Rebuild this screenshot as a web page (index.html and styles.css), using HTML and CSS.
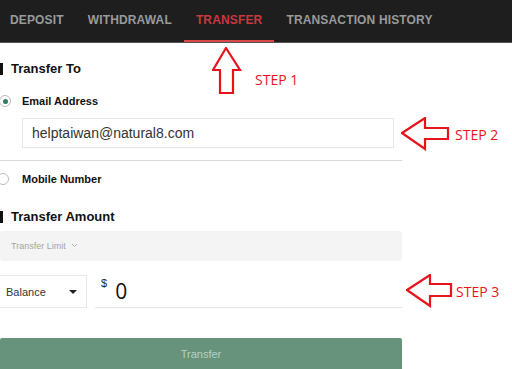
FILE: index.html
```html
<!DOCTYPE html>
<html lang="en">
<head>
  <meta charset="UTF-8" />
  <meta name="viewport" content="width=device-width, initial-scale=1" />
  <title>Transfer</title>
  <link rel="stylesheet" href="styles.css">
</head>
<body>
  <nav class="tabs">
    <a class="tab">DEPOSIT</a>
    <a class="tab">WITHDRAWAL</a>
    <a class="tab active">TRANSFER</a>
    <a class="tab">TRANSACTION HISTORY</a>
  </nav>

  <div class="page">
    <div class="form">
      <h3 class="title">Transfer To</h3>

      <label class="radio-row">
        <span class="radio checked"></span>
        <span>Email Address</span>
      </label>
      <div class="email-input">helptaiwan@natural8.com</div>

      <div class="divider"></div>

      <label class="radio-row second">
        <span class="radio"></span>
        <span>Mobile Number</span>
      </label>

      <h3 class="title amount-title">Transfer Amount</h3>

      <div class="limit">
        Transfer Limit
        <svg class="chev" width="7" height="5" viewBox="0 0 7 5"><path d="M1 1 L3.5 3.5 L6 1" fill="none" stroke="#b0b0b0" stroke-width="1"/></svg>
      </div>

      <div class="amount-row">
        <div class="select">
          <span>Balance</span>
          <span class="caret"></span>
        </div>
        <div class="amount">
          <span class="dollar">$</span>
          <span class="value">0</span>
        </div>
      </div>

      <button class="transfer-btn">Transfer</button>
    </div>

    <!-- annotations -->
    <div class="step step1">
      <svg width="30" height="48" viewBox="0 0 30 48">
        <path d="M14 1 L28 23 L21 23 L21 46 L8 46 L8 23 L1 23 Z" fill="#fff" stroke="#e8141b" stroke-width="2.2"/>
      </svg>
      <span class="step-label">STEP 1</span>
    </div>
    <div class="step step2">
      <svg width="50" height="34" viewBox="0 0 50 34">
        <path d="M1 16 L24 1 L24 11 L47 11 L47 22 L24 22 L24 32 Z" fill="#fff" stroke="#e8141b" stroke-width="2.2"/>
      </svg>
      <span class="step-label">STEP 2</span>
    </div>
    <div class="step step3">
      <svg width="48" height="34" viewBox="0 0 48 34">
        <path d="M1 16 L24 1 L24 10 L45 10 L45 22 L24 22 L24 32 Z" fill="#fff" stroke="#e8141b" stroke-width="2.2"/>
      </svg>
      <span class="step-label">STEP 3</span>
    </div>
  </div>
</body>
</html>
```

FILE: styles.css
```css
body {
  margin: 0;
  background: #fff;
  font-family: "Liberation Sans", Arial, sans-serif;
  width: 512px;
  height: 369px;
  overflow: hidden;
}
.tabs {
  display: flex;
  height: 42px;
  background: #1e1e1e;
  border-bottom: 1px solid #555;
}
.tab {
  display: block;
  padding: 0 12px;
  line-height: 41px;
  font-size: 12px;
  font-weight: bold;
  letter-spacing: 0.15px;
  color: #9a9a9a;
}
.tab:first-child {
  padding-left: 10px;
}
.tab.active {
  color: #c8393c;
  border-bottom: 2px solid #d9474a;
  line-height: 40px;
}
.page {
  position: relative;
  display: flow-root;
}
.form {
  width: 402px;
}
.title {
  position: relative;
  margin: 16px 0 0;
  height: 20px;
  line-height: 20px;
  padding-left: 11px;
  font-size: 13px;
  font-weight: bold;
  color: #111;
}
.title::before {
  content: '';
  position: absolute;
  left: 0;
  top: 4px;
  width: 3px;
  height: 12px;
  background: #111;
}
.radio-row {
  display: flex;
  align-items: center;
  gap: 11px;
  height: 20px;
  margin-top: 12px;
  font-size: 11px;
  font-weight: bold;
  color: #111;
}
.radio {
  width: 10px;
  height: 10px;
  margin-left: -1px;
  border: 1px solid #bbb;
  border-radius: 50%;
  display: flex;
  align-items: center;
  justify-content: center;
  background: #fff;
}
.radio.checked::after {
  content: '';
  width: 5px;
  height: 5px;
  border-radius: 50%;
  background: #2f7d5b;
}
.radio-row.second {
  margin-top: 8px;
}
.radio-row.second .radio {
  margin-left: -3px;
}
.radio-row.second span:last-child {
  margin-left: 2px;
}
.email-input {
  margin: 7px 8px 0 22px;
  height: 30px;
  box-sizing: border-box;
  border: 1px solid #e6e6e6;
  padding-left: 9px;
  line-height: 28px;
  font-size: 14px;
  color: #333;
}
.divider {
  margin-top: 12px;
  height: 1px;
  background: #d9d9d9;
}
.amount-title {
  margin-top: 18px;
}
.limit {
  margin-top: 4px;
  height: 30px;
  line-height: 30px;
  background: #f4f4f4;
  border-radius: 3px;
  padding-left: 11px;
  font-size: 9px;
  color: #a5a5a5;
}
.limit .chev {
  margin-left: 3px;
  vertical-align: 1px;
}
.amount-row {
  display: flex;
  gap: 8px;
  margin-top: 14px;
  height: 33px;
}
.select {
  width: 88px;
  margin-left: -1px;
  box-sizing: border-box;
  border: 1px solid #e8e8e8;
  border-left: none;
  display: flex;
  align-items: center;
  justify-content: space-between;
  padding: 0 9px 0 7px;
  font-size: 11px;
  color: #333;
}
.caret {
  width: 0;
  height: 0;
  border-left: 4px solid transparent;
  border-right: 4px solid transparent;
  border-top: 4px solid #222;
}
.amount {
  flex: 1;
  border-bottom: 1px solid #e6e6e6;
  display: flex;
  align-items: center;
  padding-left: 6px;
}
.dollar {
  font-size: 11px;
  color: #222;
  align-self: flex-start;
  margin-top: 2px;
}
.value {
  font-family: "Open Sans", sans-serif;
  font-size: 21px;
  color: #111;
  margin-left: 8px;
}
.transfer-btn {
  display: block;
  margin-top: 30px;
  width: 402px;
  height: 32px;
  border: none;
  border-radius: 2px 2px 0 0;
  background: #67937c;
  color: #b9d0c2;
  font-family: "Liberation Sans", Arial, sans-serif;
  font-size: 11px;
}
.step {
  position: absolute;
  display: flex;
  align-items: center;
}
.step svg {
  display: block;
}
.step-label {
  font-family: "Open Sans", sans-serif;
  font-size: 14px;
  color: #e8141b;
}
.step1 {
  top: 4px;
  left: 212px;
  align-items: flex-start;
}
.step1 .step-label {
  margin: 23px 0 0 13px;
}
.step2 {
  top: 74px;
  left: 401px;
}
.step2 .step-label {
  margin-left: 4px;
}
.step3 {
  top: 231px;
  left: 406px;
}
.step3 .step-label {
  margin-left: 2px;
}
```
